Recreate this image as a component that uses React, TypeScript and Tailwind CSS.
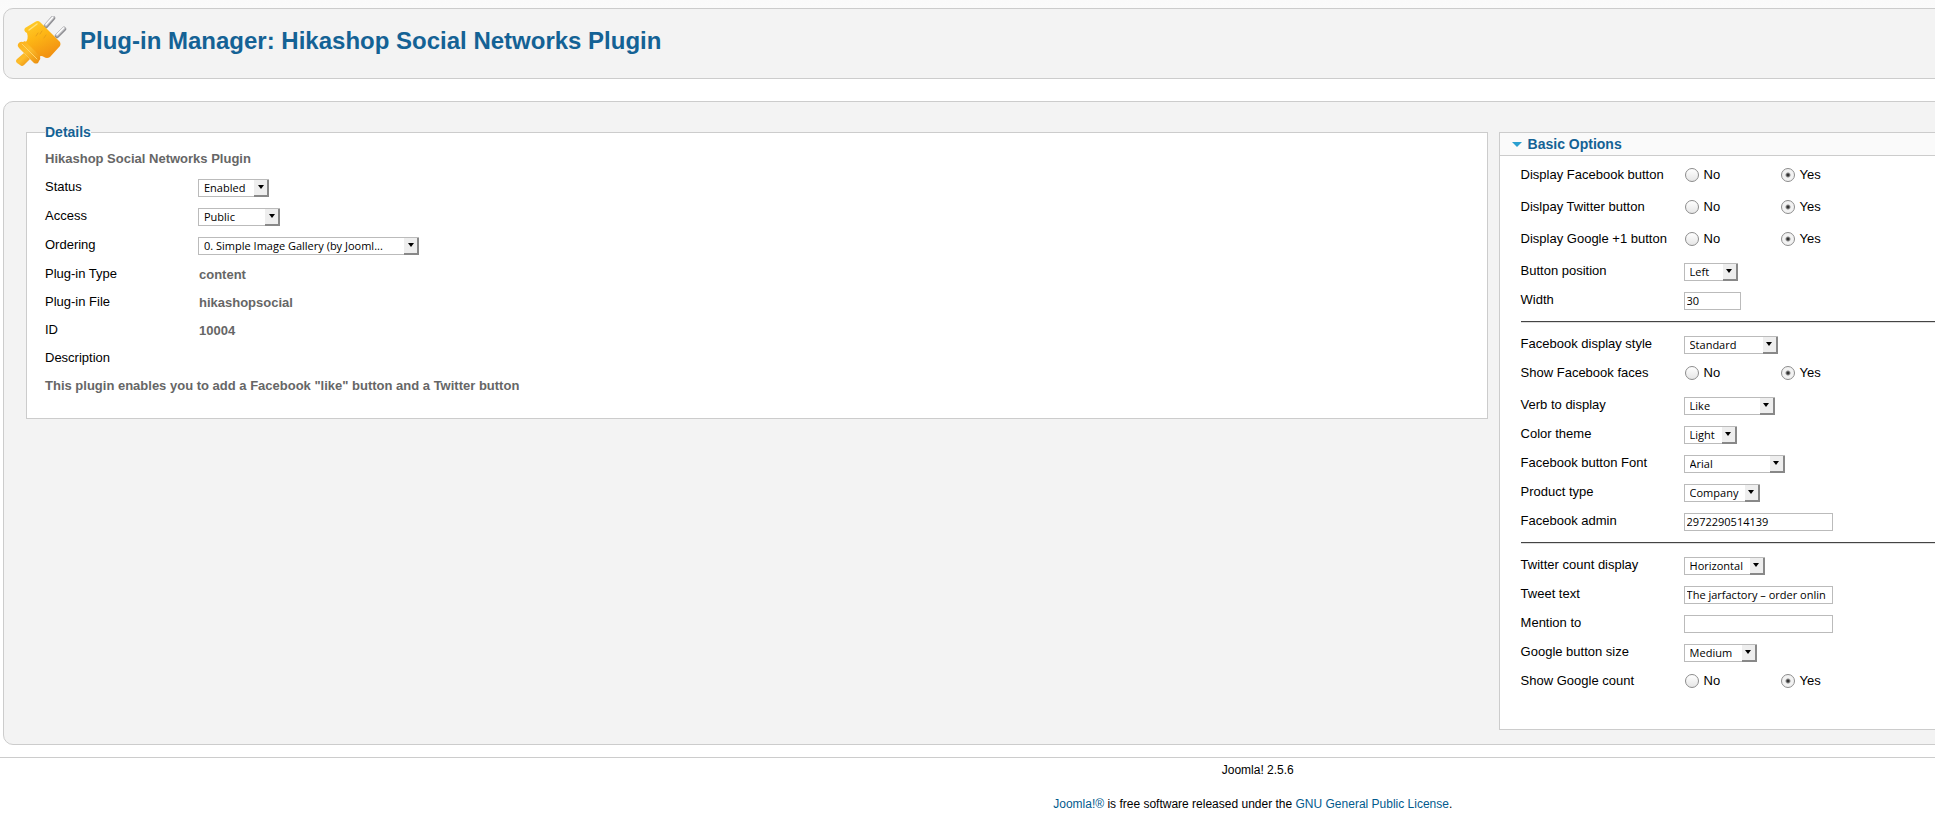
import { useId } from "react";

const rule = "border-[#cccccc]";

function PlugIcon() {
  return (
    <svg viewBox="5 6 52 52" className="h-[52px] w-[52px] shrink-0" aria-hidden="true">
      <defs>
        <linearGradient id="body" x1="0" y1="0" x2="0.5" y2="1">
          <stop offset="0" stopColor="#ffd02e" />
          <stop offset="0.5" stopColor="#fdb515" />
          <stop offset="1" stopColor="#f29312" />
        </linearGradient>
        <linearGradient id="collar" x1="0" y1="0" x2="1" y2="1">
          <stop offset="0" stopColor="#fbb01c" />
          <stop offset="0.45" stopColor="#fdbd2c" />
          <stop offset="1" stopColor="#e98a0c" />
        </linearGradient>
      </defs>
      {/* prongs */}
      <g strokeLinecap="round">
        <path d="M36 16 L43 8 M47 26 L54 19" stroke="#8e8e92" strokeWidth="4.5" />
        <path d="M36 15 L43 7 M47 25 L54 18" stroke="#c9c9cc" strokeWidth="3" />
        <path d="M36 14.500 L42.500 7.500 M47 24.500 L53.500 18" stroke="#ffffff" strokeWidth="1.2" />
      </g>
      {/* cable end, collar, body */}
      <path d="M14 43 L20 49 L14 55 Q12 57 10 55 L7 53 Q5 51 7 49 Z" fill="url(#collar)" />
      <path d="M17 23 Q13 21 15 18 L25 12 Q28 10 30 12 L50 32 Q51 34 50 36 L40 47 Q37 49 34 47 Q31 45 29 47 L15 33 Q19 29 17 23 Z" fill="url(#body)" />
      <path d="M8 34 Q10 31 13 32 L15 31 L30 46 Q31 49 29 51 L28 53 Q26 54 24 53 L9 38 Q7 36 8 34 Z" fill="url(#collar)" />
      <path d="M19 20 L27 14" stroke="#ffe27c" strokeWidth="1.500" strokeLinecap="round" />
      <path d="M28 23 L26 26 M32 21 L30 24 M36 25 L34 28" stroke="#e9a018" strokeWidth="1" strokeLinecap="round" />
      <path d="M12 34 L27 49" stroke="#ffd366" strokeWidth="1" strokeLinecap="round" />
    </svg>
  );
}

type SelectProps = { id: string; value: string; width: string };

function Select({ id, value, width }: SelectProps) {
  return (
    <div className={`relative h-[18px] ${width}`}>
      <select
        id={id}
        defaultValue={value}
        className="block h-full w-full appearance-none border border-[#bbbbbb] bg-white pl-[5px] font-['Open_Sans',sans-serif] text-[11px] leading-4 text-black"
      >
        <option>{value}</option>
      </select>
      <span className="pointer-events-none absolute right-0 bottom-0 flex h-[17px] w-[15px] items-center justify-center border-r-2 border-b-2 border-[#888888] bg-[#eeeeee]">
        <span className="h-0 w-0 border-x-[3px] border-t-4 border-x-transparent border-t-black" />
      </span>
    </div>
  );
}

export default function App() {
  return <Page />;
}

function Page() {
  return (
    <div className="overflow-hidden bg-white font-['Liberation_Sans',Arial,sans-serif] text-[13px] leading-5 text-black">
      <div className="w-[130%]">
        <Header />
        <main className={`mx-[3px] mt-[22px] rounded-[10px] border bg-[#f3f3f3] px-[22px] pt-5 pb-[14px] ${rule}`}>
          <div className="grid grid-cols-[1.475fr_1fr] items-start gap-[11px]">
            <Details />
            <BasicOptions />
          </div>
        </main>
        <Footer />
      </div>
    </div>
  );
}

function Header() {
  return (
    <div className="bg-gradient-to-b from-[#fafafa] to-white px-[3px] pt-2">
      <header className={`flex h-[71px] items-start gap-[13px] rounded-[10px] border bg-[#f3f3f3] pt-[7px] pl-[11px] ${rule}`}>
        <PlugIcon />
        <h1 className="pt-[9px] text-2xl leading-8 font-bold text-[#146295]">
          Plug-in Manager: Hikashop Social Networks Plugin
        </h1>
      </header>
    </div>
  );
}

const detailSelects = [
  { label: "Status", value: "Enabled", width: "w-[71px]" },
  { label: "Access", value: "Public", width: "w-[82px]" },
  { label: "Ordering", value: "0. Simple Image Gallery (by Jooml...", width: "w-[221px]" },
];

const detailValues = [
  { label: "Plug-in Type", value: "content" },
  { label: "Plug-in File", value: "hikashopsocial" },
  { label: "ID", value: "10004" },
  { label: "Description", value: "" },
];

function Details() {
  return (
    <fieldset className={`border bg-white px-[18px] pt-[3px] pb-[18px] ${rule}`}>
      <legend className="text-sm font-bold text-[#146295]">Details</legend>
      <p className="flex h-7 items-center font-bold text-[#666666]">Hikashop Social Networks Plugin</p>
      {detailSelects.map((row) => (
        <div key={row.label} className="flex h-[29px] items-center">
          <label htmlFor={row.label} className="w-[153px] pb-0.5">{row.label}</label>
          <Select id={row.label} value={row.value} width={row.width} />
        </div>
      ))}
      <dl>
        {detailValues.map((row) => (
          <div key={row.label} className="flex h-7 items-center">
            <dt className="w-[154px]">{row.label}</dt>
            <dd className="pt-0.5 font-bold text-[#666666]">{row.value}</dd>
          </div>
        ))}
      </dl>
      <p className="flex h-7 items-center font-bold text-[#666666]">
        This plugin enables you to add a Facebook "like" button and a Twitter button
      </p>
    </fieldset>
  );
}

type Option =
  | { kind: "radio"; label: string }
  | { kind: "select"; label: string; value: string; width: string }
  | { kind: "text"; label: string; value: string; width: string };

const optionGroups: Option[][] = [
  [
    { kind: "radio", label: "Display Facebook button" },
    { kind: "radio", label: "Dislpay Twitter button" },
    { kind: "radio", label: "Display Google +1 button" },
    { kind: "select", label: "Button position", value: "Left", width: "w-[54px]" },
    { kind: "text", label: "Width", value: "30", width: "w-[57px]" },
  ],
  [
    { kind: "select", label: "Facebook display style", value: "Standard", width: "w-[94px]" },
    { kind: "radio", label: "Show Facebook faces" },
    { kind: "select", label: "Verb to display", value: "Like", width: "w-[91px]" },
    { kind: "select", label: "Color theme", value: "Light", width: "w-[53px]" },
    { kind: "select", label: "Facebook button Font", value: "Arial", width: "w-[101px]" },
    { kind: "select", label: "Product type", value: "Company", width: "w-[76px]" },
    { kind: "text", label: "Facebook admin", value: "2972290514139", width: "w-[149px]" },
  ],
  [
    { kind: "select", label: "Twitter count display", value: "Horizontal", width: "w-[81px]" },
    { kind: "text", label: "Tweet text", value: "The jarfactory – order onlin", width: "w-[149px]" },
    { kind: "text", label: "Mention to", value: "", width: "w-[149px]" },
    { kind: "select", label: "Google button size", value: "Medium", width: "w-[73px]" },
    { kind: "radio", label: "Show Google count" },
  ],
];

function Radio({ name, label, checked }: { name: string; label: string; checked: boolean }) {
  return (
    <label className="flex w-24 items-center gap-[5px]">
      <input
        type="radio"
        name={name}
        defaultChecked={checked}
        className="h-[14px] w-[14px] appearance-none rounded-full border border-[#8c8c8c] bg-gradient-to-b from-white to-[#e6e6e6] checked:bg-[radial-gradient(circle,#333333_1px,#f2f2f2_3px)]"
      />
      {label}
    </label>
  );
}

function OptionRow({ option }: { option: Option }) {
  const id = useId();

  if (option.kind === "radio") {
    return (
      <div role="radiogroup" aria-labelledby={id} className="flex h-8 items-center pb-1">
        <span id={id} className="w-[164px]">{option.label}</span>
        <Radio name={id} label="No" checked={false} />
        <Radio name={id} label="Yes" checked />
      </div>
    );
  }

  return (
    <div className="flex h-[29px] items-center">
      <label htmlFor={id} className="w-[163px] pb-0.5">{option.label}</label>
      {option.kind === "select" ? (
        <Select id={id} value={option.value} width={option.width} />
      ) : (
        <input
          id={id}
          type="text"
          defaultValue={option.value}
          className={`h-[18px] border border-[#bbbbbb] bg-white px-0.5 font-['Open_Sans',sans-serif] text-[11px] leading-4 ${option.width}`}
        />
      )}
    </div>
  );
}

function BasicOptions() {
  return (
    <section className={`mt-[10px] border bg-white pb-[30px] ${rule}`}>
      <h3 className={`flex h-[23px] items-center border-b bg-[#fafafa] pl-3 text-sm font-bold ${rule}`}>
        <button type="button" className="flex items-center gap-1.5 text-[#146295]">
          <span className="h-0 w-0 border-x-[5px] border-t-[5px] border-x-transparent border-t-[#2a9fd0]" />
          Basic Options
        </button>
      </h3>
      <div className="pt-[5px] pl-[21px]">
        {optionGroups.map((group, i) => (
          <div key={i}>
            {i > 0 && <hr className="mt-1.5 mb-[7px] h-[2px] border-t border-b border-t-[#444444] border-b-[#dddddd]" />}
            {group.map((option) => (
              <OptionRow key={option.label} option={option} />
            ))}
          </div>
        ))}
      </div>
    </section>
  );
}

function Footer() {
  return (
    <footer className={`mt-3 border-t pt-0.5 pb-[11px] text-center text-xs leading-5 ${rule}`}>
      <p>Joomla! 2.5.6</p>
      <p className="mt-[14px] pr-[10px]">
        <a href="#joomla" className="text-[#025a8d]">Joomla!®</a> is free software released under the{" "}
        <a href="#license" className="text-[#025a8d]">GNU General Public License</a>.
      </p>
    </footer>
  );
}
